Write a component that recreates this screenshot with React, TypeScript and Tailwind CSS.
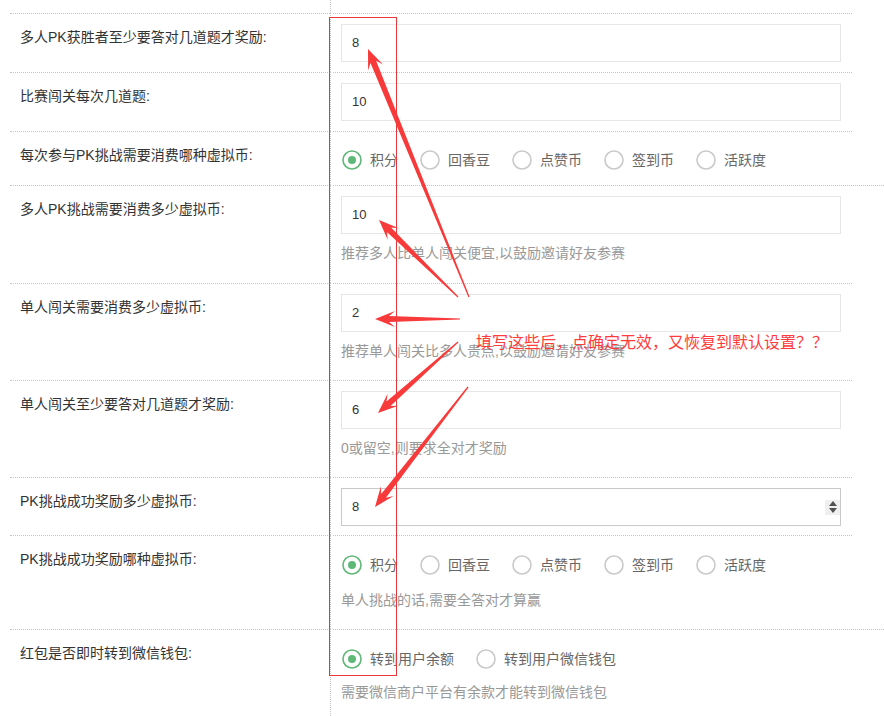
import React from "react";

type Pt = [number, number];

// tapered annotation arrow: thin tail, wide neck, swept head
const arrowPoints = (tail: Pt, tip: Pt) => {
  const [x1, y1] = tail;
  const [x2, y2] = tip;
  const len = Math.hypot(x2 - x1, y2 - y1);
  const ux = (x2 - x1) / len;
  const uy = (y2 - y1) / len;
  const nx = -uy;
  const ny = ux;
  const L = 20;
  const hw = 8;
  const neckBack = 14;
  const neck = 3;
  const tailW = 0.6;
  const bx = x2 - ux * L;
  const by = y2 - uy * L;
  const kx = x2 - ux * neckBack;
  const ky = y2 - uy * neckBack;
  const pts: Pt[] = [
    [x1 + nx * tailW, y1 + ny * tailW],
    [kx + nx * neck, ky + ny * neck],
    [bx + nx * hw, by + ny * hw],
    [x2, y2],
    [bx - nx * hw, by - ny * hw],
    [kx - nx * neck, ky - ny * neck],
    [x1 - nx * tailW, y1 - ny * tailW],
  ];
  return pts.map((p) => p.map((v) => v.toFixed(1)).join(",")).join(" ");
};

const arrows: { tail: Pt; tip: Pt }[] = [
  { tail: [469, 297], tip: [368, 49] },
  { tail: [458, 297], tip: [379, 220] },
  { tail: [460, 319], tip: [375, 319] },
  { tail: [458, 342], tip: [378, 413] },
  { tail: [468, 387], tip: [375, 507] },
];

const RadioIcon = ({ checked }: { checked?: boolean }) => (
  <svg width="20" height="20" viewBox="0 0 20 20" className="shrink-0">
    <circle
      cx="10"
      cy="10"
      r="9"
      fill="none"
      stroke={checked ? "#5FB878" : "#c9c9c9"}
      strokeWidth="1.6"
    />
    {checked && <circle cx="10" cy="10" r="4" fill="#5FB878" />}
  </svg>
);

const RadioGroup = ({
  options,
  height,
}: {
  options: string[];
  height: string;
}) => (
  <div className={`flex items-center pl-[1px] ${height}`}>
    {options.map((o, i) => (
      <div key={o} className="flex items-center pr-[22px]">
        <RadioIcon checked={i === 0} />
        <span className="ml-[8px] text-[14px] leading-[20px] text-[#666]">
          {o}
        </span>
      </div>
    ))}
  </div>
);

const TextInput = ({
  value,
  number,
}: {
  value: string;
  number?: boolean;
}) => (
  <div
    className={`flex items-center w-[500px] h-[38px] border pl-[10px] text-[13px] text-[#333] ${
      number ? "border-[#c9c9c9]" : "border-[#e6e6e6]"
    }`}
  >
    <span>{value}</span>
    {number && (
      <div className="ml-auto flex flex-col items-center justify-center gap-[2px] w-[15px] h-[15px] bg-[#efefef]">
        <span className="w-0 h-0 border-x-[4px] border-x-transparent border-b-[5px] border-b-[#505050]" />
        <span className="w-0 h-0 border-x-[4px] border-x-transparent border-t-[5px] border-t-[#505050]" />
      </div>
    )}
  </div>
);

const Help = ({ children, cls }: { children: string; cls: string }) => (
  <div className={`flex items-center text-[14px] text-[#999] ${cls}`}>
    {children}
  </div>
);

const Row = ({
  label,
  wide,
  inner,
  children,
}: {
  label: string;
  wide?: boolean;
  inner: string;
  children: React.ReactNode;
}) => (
  <div className="flex">
    <div className="w-[320px] ml-[10px] border-t border-dotted border-[#c4c4c4] pt-[13px] pl-[10px] text-[14px] leading-[20px] text-[#333]">
      {label}
    </div>
    <div className="flex-1 border-l border-dotted border-[#c4c4c4]">
      <div
        className={`ml-[2px] border-t border-dotted border-[#c4c4c4] pl-[8px] pt-[10px] ${
          wide ? "mr-0" : "mr-[32px]"
        } ${inner}`}
      >
        {children}
      </div>
    </div>
  </div>
);

const coins = ["积分", "回香豆", "点赞币", "签到币", "活跃度"];

export default function App() {
  return (
    <div className="relative w-[884px] h-[716px] overflow-hidden bg-white font-['Liberation_Sans','Noto_Sans_CJK_SC',sans-serif]">
      <div className="flex h-[13px]">
        <div className="w-[330px]" />
        <div className="flex-1 border-l border-dotted border-[#c4c4c4]" />
      </div>

      <Row label="多人PK获胜者至少要答对几道题才奖励:" inner="pb-[10px]">
        <TextInput value="8" />
      </Row>
      <Row label="比赛闯关每次几道题:" inner="pb-[10px]">
        <TextInput value="10" />
      </Row>
      <Row label="每次参与PK挑战需要消费哪种虚拟币:" inner="pb-[7px]">
        <RadioGroup options={coins} height="h-[36px]" />
      </Row>
      <Row label="多人PK挑战需要消费多少虚拟币:" wide inner="pb-[10px]">
        <TextInput value="10" />
        <Help cls="h-[39px]">推荐多人比单人闯关便宜,以鼓励邀请好友参赛</Help>
      </Row>
      <Row label="单人闯关需要消费多少虚拟币:" inner="pb-[10px]">
        <TextInput value="2" />
        <Help cls="h-[38px]">推荐单人闯关比多人贵点,以鼓励邀请好友参赛</Help>
      </Row>
      <Row label="单人闯关至少要答对几道题才奖励:" inner="pb-[10px]">
        <TextInput value="6" />
        <Help cls="h-[38px]">0或留空,则要求全对才奖励</Help>
      </Row>
      <Row label="PK挑战成功奖励多少虚拟币:" inner="pb-[9px]">
        <TextInput value="8" number />
      </Row>
      <Row label="PK挑战成功奖励哪种虚拟币:" inner="pb-[13px]">
        <RadioGroup options={coins} height="h-[38px]" />
        <Help cls="h-[32px]">单人挑战的话,需要全答对才算赢</Help>
      </Row>
      <Row label="红包是否即时转到微信钱包:" wide inner="pb-[20px]">
        <RadioGroup
          options={["转到用户余额", "转到用户微信钱包"]}
          height="h-[38px]"
        />
        <Help cls="h-[28px]">需要微信商户平台有余款才能转到微信钱包</Help>
      </Row>

      {/* annotation overlay */}
      <div className="absolute left-[329px] top-[17px] w-[68px] h-[659px] border border-[#e8363b] pointer-events-none" />
      <div className="absolute left-[476px] top-[330px] text-[16px] leading-[22px] text-[#ff3b3b] font-['Noto_Sans_CJK_SC',sans-serif] whitespace-nowrap">
        填写这些后，点确定无效，又恢复到默认设置？？
      </div>
      <svg
        className="absolute inset-0 pointer-events-none"
        width="884"
        height="716"
        viewBox="0 0 884 716"
      >
        {arrows.map((a, i) => (
          <polygon key={i} points={arrowPoints(a.tail, a.tip)} fill="#f83a3a" />
        ))}
      </svg>
    </div>
  );
}
